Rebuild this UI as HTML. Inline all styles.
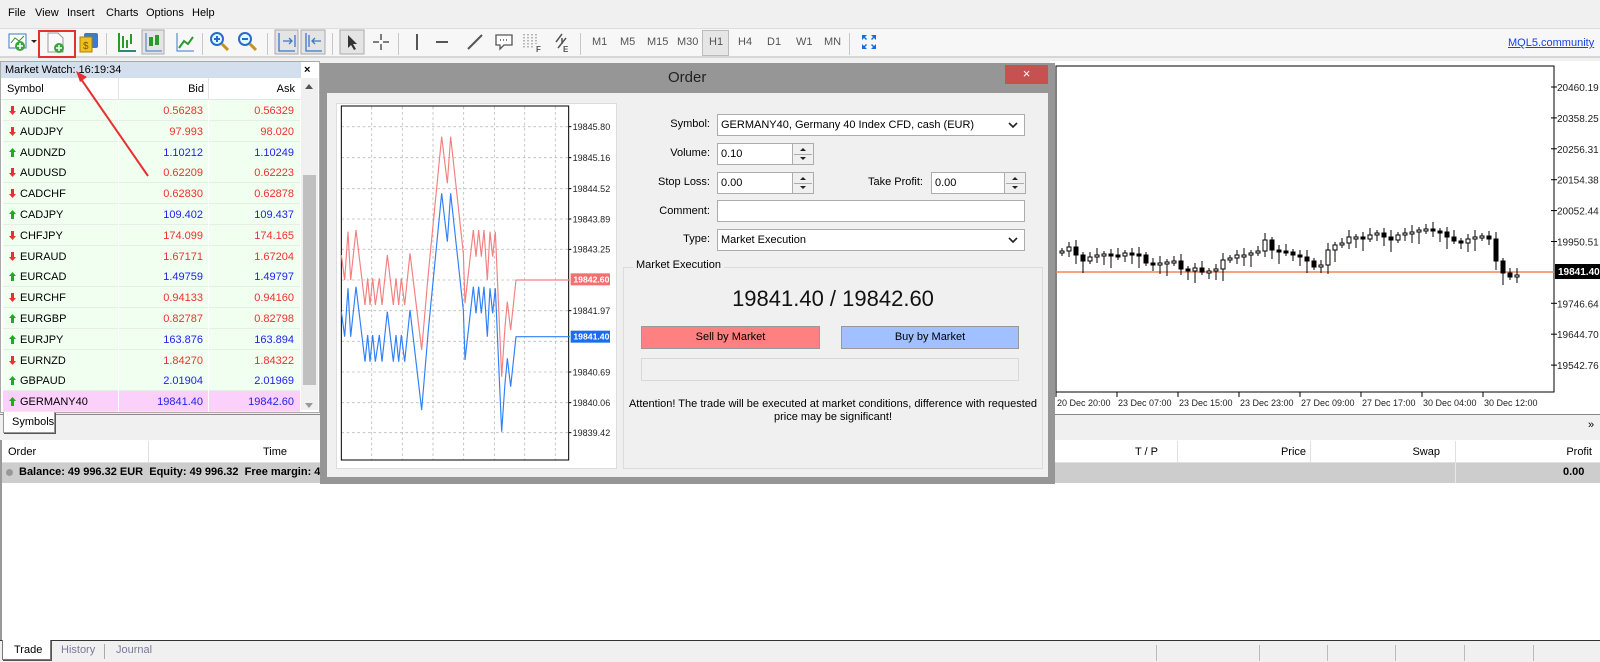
<!DOCTYPE html>
<html><head><meta charset="utf-8"><style>
*{box-sizing:border-box;margin:0;padding:0}
body{width:1600px;height:662px;overflow:hidden;background:#f0f0f0;font-family:"Liberation Sans",sans-serif;font-size:11px;color:#000;position:relative}
.a{position:absolute}
.r{text-align:right}
.mw div.row{position:absolute;left:3px;width:297px;height:21px;background:#f0fff0;border-bottom:1px solid #e6efe6}
.row span{position:absolute;top:5px}
.tf{position:absolute;top:36px;color:#555;font-size:11px}
.sep{position:absolute;top:33px;width:1px;height:22px;background:#c8c8c8}
.inp{position:absolute;background:#fff;border:1px solid #acacac;height:22px;padding:4px 3px;font-size:11px}
.lbl{position:absolute;text-align:right;width:90px;font-size:11px}
.spin{position:absolute;width:22px;height:22px;border:1px solid #acacac;background:#f0f0f0}
.spin:before{content:"";position:absolute;left:7px;top:4px;border:3px solid transparent;border-bottom:3px solid #222;border-top:0}
.spin:after{content:"";position:absolute;left:7px;top:13px;border:3px solid transparent;border-top:3px solid #222;border-bottom:0}
.spin i{position:absolute;left:1px;right:1px;top:10px;height:1px;background:#acacac}
.th{position:absolute;top:446px;font-size:11px}
.mn{position:absolute;top:7px;font-size:11px}
</style></head><body>
<div class="a" style="left:0;top:0;width:1600px;height:28px;background:#f0f0f0"></div>
<span class="mn" style="left:8px">File</span><span class="mn" style="left:35px">View</span><span class="mn" style="left:67px">Insert</span><span class="mn" style="left:106px">Charts</span><span class="mn" style="left:146px">Options</span><span class="mn" style="left:192px">Help</span>
<div class="a" style="left:0;top:28px;width:1600px;height:30px;background:#f7f7f7;border-top:1px solid #ddd;border-bottom:2px solid #d6d6d6"></div>
<svg class="a" style="left:0;top:28px" width="600" height="30">
<rect x="9" y="6" width="17" height="14" fill="#fff" stroke="#3a78c8"/><polyline points="11,15 15,10 19,13 24,8" fill="none" stroke="#2a9a2a"/><circle cx="20" cy="18" r="5" fill="#3aa63a"/><path d="M20 15v6M17 18h6" stroke="#fff" stroke-width="1.5"/>
<path d="M31 12h6l-3 3z" fill="#222"/>
<path d="M48 5h10l5 5v14h-15z" fill="#fafafa" stroke="#999"/><circle cx="59" cy="20" r="5" fill="#3aa63a"/><path d="M59 17v6M56 20h6" stroke="#fff" stroke-width="1.5"/>
<rect x="84" y="5" width="14" height="15" fill="#3a7ad0" rx="2"/><rect x="80" y="9" width="12" height="15" fill="#f0c020" stroke="#b08000"/><text x="83" y="21" font-size="10" fill="#7a5a00">$</text>
<path d="M119 5v18h17M123 8v12M127 12v8M131 6v10" stroke="#2a9a2a" stroke-width="2" fill="none"/><path d="M119 23h17" stroke="#3a78c8"/>
<rect x="142" y="2" width="22" height="24" fill="#e4e4e4" stroke="#aaa"/><path d="M146 5v18h16" stroke="#3a78c8" fill="none"/><rect x="149" y="9" width="4" height="9" fill="#2a9a2a"/><rect x="155" y="7" width="4" height="10" fill="#2a9a2a"/>
<path d="M177 5v18h17" stroke="#3a78c8" fill="none"/><polyline points="179,20 184,13 188,16 193,9" fill="none" stroke="#2a9a2a" stroke-width="2"/>
<circle cx="217" cy="11" r="6" fill="#dff" stroke="#2a6acc" stroke-width="2"/><path d="M214 11h6M217 8v6" stroke="#2a6acc" stroke-width="2"/><path d="M222 16l6 6" stroke="#c89020" stroke-width="3"/>
<circle cx="245" cy="11" r="6" fill="#dff" stroke="#2a6acc" stroke-width="2"/><path d="M242 11h6" stroke="#2a6acc" stroke-width="2"/><path d="M250 16l6 6" stroke="#c89020" stroke-width="3"/>
<rect x="275" y="2" width="23" height="24" fill="#e4e4e4" stroke="#aaa"/><path d="M279 5v18h16M295 7v12M283 13h9M289 10l3 3-3 3" stroke="#3a78c8" stroke-width="1.3" fill="none"/>
<rect x="301" y="2" width="24" height="24" fill="#e4e4e4" stroke="#aaa"/><path d="M306 5v18h16M309 7v12M312 13h9M315 10l-3 3 3 3" stroke="#3a78c8" stroke-width="1.3" fill="none"/>
<rect x="340" y="2" width="24" height="24" fill="#e4e4e4" stroke="#aaa"/><path d="M348 7v13l3-3 3 5 2-1-3-5h4z" fill="#333"/>
<path d="M381 6v6M381 16v6M373 14h6M383 14h6" stroke="#555" stroke-width="1.5"/>
<path d="M417 6v16" stroke="#555" stroke-width="2"/><path d="M436 14h12" stroke="#555" stroke-width="2"/><path d="M468 21l14-14" stroke="#555" stroke-width="2"/>
<path d="M496 7h16v10h-8l-4 4v-4h-4z" fill="#fff" stroke="#555" stroke-width="1.3"/><path d="M500 12h1M503 12h1M506 12h1" stroke="#555" stroke-width="1.5"/>
<path d="M524 6v14M528 6v14M532 6v14M536 6v10" stroke="#777" stroke-dasharray="1.5 1.5"/><text x="536" y="24" font-size="8" font-weight="bold" fill="#555">F</text>
<path d="M556 14l6-8M558 20l8-10M562 10v6" stroke="#555" stroke-width="1.5"/><text x="563" y="24" font-size="8" font-weight="bold" fill="#555">E</text>
</svg>
<div class="a" style="left:38px;top:30px;width:38px;height:28px;border:2px solid #e53030"></div>
<div class="sep" style="left:106px"></div><div class="sep" style="left:202px"></div><div class="sep" style="left:267px"></div><div class="sep" style="left:332px"></div><div class="sep" style="left:398px"></div><div class="sep" style="left:580px"></div><div class="sep" style="left:849px"></div>
<span class="tf" style="left:592px">M1</span><span class="tf" style="left:620px">M5</span><span class="tf" style="left:647px">M15</span><span class="tf" style="left:677px">M30</span>
<div class="a" style="left:702px;top:30px;width:27px;height:26px;background:#e6e6e6;border:1px solid #bbb"></div>
<span class="tf" style="left:709px">H1</span><span class="tf" style="left:738px">H4</span><span class="tf" style="left:767px">D1</span><span class="tf" style="left:796px">W1</span><span class="tf" style="left:824px">MN</span>
<svg class="a" style="left:862px;top:35px" width="14" height="14"><path d="M0 0h5l-2 2 2 2-1 1-2-2-2 2zM14 0v5l-2-2-2 2-1-1 2-2-2-2zM0 14v-5l2 2 2-2 1 1-2 2 2 2zM14 14h-5l2-2-2-2 1-1 2 2 2-2z" fill="#1a6ae0"/></svg>
<div class="a" style="left:1508px;top:37px;color:#1a3ee8;text-decoration:underline;font-size:11px">MQL5.community</div>

<div class="a" style="left:0;top:61px;width:320px;height:352px;background:#fff;border:1px solid #aaa"></div>
<div class="a" style="left:1px;top:62px;width:300px;height:16px;background:#d3dfec"></div>
<div class="a" style="left:5px;top:64px;font-size:11px">Market Watch: 16:19:34</div>
<div class="a" style="left:304px;top:64px;font-weight:bold">×</div>
<div class="a" style="left:1px;top:78px;width:300px;height:22px;background:#fff;border-bottom:1px solid #e4e4e4"></div>
<div class="a" style="left:118px;top:78px;width:1px;height:22px;background:#e4e4e4"></div><div class="a" style="left:208px;top:78px;width:1px;height:22px;background:#e4e4e4"></div>
<div class="a" style="left:7px;top:83px">Symbol</div><div class="a r" style="left:150px;width:54px;top:83px">Bid</div><div class="a r" style="left:240px;width:55px;top:83px">Ask</div>
<div class="a" style="left:301px;top:78px;width:17px;height:332px;background:#f0f0f0"></div>
<div class="a" style="left:303px;top:175px;width:13px;height:210px;background:#c0c0c0"></div>
<div class="a" style="left:305px;top:84px;border:4px solid transparent;border-bottom:5px solid #555;border-top:0"></div>
<div class="a" style="left:305px;top:403px;border:4px solid transparent;border-top:5px solid #999;border-bottom:0"></div>
<div class="mw" id="mw"></div>

<div class="a" style="left:1050px;top:61px;width:550px;height:353px;background:#fff"></div>
<svg class="a" style="left:1050px;top:61px" width="550" height="353" id="ch"></svg>
<div class="a" style="left:0;top:414px;width:1600px;height:27px;background:#f0f0f0;border-top:1px solid #888"></div>
<div class="a" style="left:1588px;top:419px;font-size:11px">»</div>
<div class="a" style="left:3px;top:412px;width:52px;height:21px;background:#fff;border:1px solid #999;border-top:0;box-shadow:1px 1px 0 #555"></div>
<div class="a" style="left:12px;top:416px">Symbols</div>
<div class="a" style="left:0;top:440px;width:1600px;height:200px;background:#fff;border-left:2px solid #999"></div>
<div class="a" style="left:2px;top:441px;width:1598px;height:22px;background:#fff;border-bottom:1px solid #e0e0e0"></div>
<div class="a" style="left:148px;top:441px;width:1px;height:22px;background:#e0e0e0"></div>
<div class="a" style="left:1177px;top:441px;width:1px;height:22px;background:#e0e0e0"></div>
<div class="a" style="left:1310px;top:441px;width:1px;height:22px;background:#e0e0e0"></div>
<div class="a" style="left:1455px;top:441px;width:1px;height:22px;background:#e0e0e0"></div>
<span class="th" style="left:8px">Order</span><span class="th r" style="left:230px;width:57px">Time</span>
<span class="th r" style="left:1100px;width:58px">T / P</span><span class="th r" style="left:1250px;width:56px">Price</span><span class="th r" style="left:1380px;width:60px">Swap</span><span class="th r" style="left:1530px;width:62px">Profit</span>
<div class="a" style="left:2px;top:463px;width:1598px;height:20px;background:#cdcdcd"></div>
<div class="a" style="left:1455px;top:463px;width:1px;height:20px;background:#e8e8e8"></div>
<div class="a" style="left:6px;top:469px;width:7px;height:7px;border-radius:50%;background:#999"></div>
<div class="a" style="left:19px;top:466px;font-weight:bold">Balance: 49 996.32 EUR&nbsp; Equity: 49 996.32&nbsp; Free margin: 49 996.32</div>
<div class="a" style="left:1563px;top:466px;font-weight:bold">0.00</div>
<div class="a" style="left:0;top:640px;width:1600px;height:22px;background:#f0f0f0;border-top:1px solid #333"></div>
<div class="a" style="left:2px;top:640px;width:49px;height:20px;background:#fff;border:1px solid #777;border-top:0;box-shadow:1px 1px 0 #555"></div>
<div class="a" style="left:14px;top:644px">Trade</div>
<div class="a" style="left:61px;top:644px;color:#7a7a9a">History</div><div class="a" style="left:104px;top:644px;width:1px;height:15px;background:#aaa"></div>
<div class="a" style="left:116px;top:644px;color:#7a7a9a">Journal</div>
<div class="a" style="left:1156px;top:645px;width:1px;height:16px;background:#bbb"></div><div class="a" style="left:1259px;top:645px;width:1px;height:16px;background:#bbb"></div><div class="a" style="left:1327px;top:645px;width:1px;height:16px;background:#bbb"></div><div class="a" style="left:1395px;top:645px;width:1px;height:16px;background:#bbb"></div><div class="a" style="left:1464px;top:645px;width:1px;height:16px;background:#bbb"></div><div class="a" style="left:1533px;top:645px;width:1px;height:16px;background:#bbb"></div>

<div class="a" style="left:320px;top:63px;width:735px;height:421px;background:#969696"></div>
<div class="a" style="left:668px;top:69px;font-size:15px;color:#222">Order</div>
<div class="a" style="left:1005px;top:65px;width:43px;height:19px;background:#c75050;color:#fff;text-align:center;font-size:13px;line-height:18px">×</div>
<div class="a" style="left:327px;top:93px;width:721px;height:384px;background:#f0f0f0"></div>
<div class="a" style="left:336px;top:103px;width:281px;height:366px;background:#fff;border:1px solid #ddd"></div>
<svg class="a" style="left:320px;top:100px" width="290" height="370" viewBox="0 0 870 1110">
<g stroke="#bbb" stroke-width="2.5" stroke-dasharray="8 8">
<path d="M155 20v1060M247 20v1060M339 20v1060M431 20v1060M523 20v1060M614 20v1060M706 20v1060"/>
<path d="M64 80h682M64 173h682M64 266h682M64 357h682M64 448h682M64 540h682M64 632h682M64 724h682M64 816h682M64 908h682M64 998h682"/>
</g>
<rect x="64" y="18" width="682" height="1062" fill="none" stroke="#000" stroke-width="3"/>
<polyline id="rl" fill="none" stroke="#f48080" stroke-width="3.5" points=""/>
<polyline id="bl" fill="none" stroke="#3080f8" stroke-width="3.5" points=""/>
<g font-family="Liberation Sans" font-size="27" fill="#222">
<text x="758" y="90">19845.80</text><text x="758" y="183">19845.16</text><text x="758" y="276">19844.52</text><text x="758" y="367">19843.89</text><text x="758" y="458">19843.25</text><text x="758" y="642">19841.97</text><text x="758" y="826">19840.69</text><text x="758" y="918">19840.06</text><text x="758" y="1008">19839.42</text>
</g>
<g stroke="#000" stroke-width="3"><path d="M746 80h8M746 173h8M746 266h8M746 357h8M746 448h8M746 632h8M746 816h8M746 908h8M746 998h8"/></g>
<rect x="752" y="520" width="118" height="36" fill="#f47070"/><text x="760" y="547" font-family="Liberation Sans" font-size="26" font-weight="bold" fill="#fff">19842.60</text>
<rect x="752" y="692" width="118" height="36" fill="#1a6cf0"/><text x="760" y="719" font-family="Liberation Sans" font-size="26" font-weight="bold" fill="#fff">19841.40</text>
</svg>
<div class="lbl" style="left:620px;top:118px">Symbol:</div>
<div class="inp" style="left:717px;top:114px;width:308px">GERMANY40, Germany 40 Index CFD, cash (EUR)</div>
<svg class="a" style="left:1008px;top:122px" width="10" height="7"><path d="M1 1l4 4 4-4" stroke="#222" stroke-width="1.6" fill="none"/></svg>
<div class="lbl" style="left:620px;top:147px">Volume:</div>
<div class="inp" style="left:717px;top:143px;width:76px">0.10</div><div class="spin" style="left:792px;top:143px"><i></i></div>
<div class="lbl" style="left:620px;top:176px">Stop Loss:</div>
<div class="inp" style="left:717px;top:172px;width:76px">0.00</div><div class="spin" style="left:792px;top:172px"><i></i></div>
<div class="lbl" style="left:833px;top:176px">Take Profit:</div>
<div class="inp" style="left:931px;top:172px;width:76px">0.00</div><div class="spin" style="left:1004px;top:172px"><i></i></div>
<div class="lbl" style="left:620px;top:205px">Comment:</div>
<div class="inp" style="left:717px;top:200px;width:308px"></div>
<div class="lbl" style="left:620px;top:233px">Type:</div>
<div class="inp" style="left:717px;top:229px;width:308px">Market Execution</div>
<svg class="a" style="left:1008px;top:237px" width="10" height="7"><path d="M1 1l4 4 4-4" stroke="#222" stroke-width="1.6" fill="none"/></svg>
<div class="a" style="left:623px;top:267px;width:420px;height:202px;border:1px solid #dcdcdc"></div>
<div class="a" style="left:633px;top:259px;background:#f0f0f0;padding:0 3px">Market Execution</div>
<div class="a" style="left:623px;top:286px;width:420px;text-align:center;font-size:22px;color:#111">19841.40 / 19842.60</div>
<div class="a" style="left:641px;top:326px;width:179px;height:23px;background:#ff8080;border:1px solid #999;text-align:center;line-height:21px">Sell by Market</div>
<div class="a" style="left:841px;top:326px;width:178px;height:23px;background:#a0c0ff;border:1px solid #999;text-align:center;line-height:21px">Buy by Market</div>
<div class="a" style="left:641px;top:358px;width:378px;height:23px;border:1px solid #d8d8d8"></div>
<div class="a" style="left:623px;top:398px;width:420px;text-align:center;line-height:13px">Attention! The trade will be executed at market conditions, difference with requested<br>price may be significant!</div>

<svg class="a" style="left:0;top:0" width="200" height="200"><path d="M148 176L81 79" stroke="#e53030" stroke-width="2"/><path d="M76 71l11 6-7 5z" fill="#e53030"/></svg>

<script>
(function(){
var rows=[["AUDCHF",0,"0.56283","0.56329",0],["AUDJPY",0,"97.993","98.020",0],["AUDNZD",1,"1.10212","1.10249",1],["AUDUSD",0,"0.62209","0.62223",0],["CADCHF",0,"0.62830","0.62878",0],["CADJPY",1,"109.402","109.437",1],["CHFJPY",0,"174.099","174.165",0],["EURAUD",0,"1.67171","1.67204",0],["EURCAD",1,"1.49759","1.49797",1],["EURCHF",0,"0.94133","0.94160",0],["EURGBP",1,"0.82787","0.82798",0],["EURJPY",1,"163.876","163.894",1],["EURNZD",0,"1.84270","1.84322",0],["GBPAUD",1,"2.01904","2.01969",1],["GERMANY40",1,"19841.40","19842.60",1]];
var h="";rows.forEach(function(r,i){var t=100+i*20.8;var c=r[4]?"#2222ee":"#f03030";var bg=i==14?"background:#fbd0fb":"";
var ar=r[1]?'<svg style="position:absolute;left:6px;top:6px" width="7" height="9"><path d="M3.5 0L7 4H5v5H2V4H0z" fill="#1faa1f"/></svg>':'<svg style="position:absolute;left:6px;top:6px" width="7" height="9"><path d="M3.5 9L7 5H5V0H2v5H0z" fill="#e83030"/></svg>';
h+='<div class="row" style="top:'+t+'px;'+bg+'">'+ar+'<span style="left:17px">'+r[0]+'</span><span style="left:115px;width:1px;height:21px;top:0;background:#fff"></span><span style="left:205px;width:1px;height:21px;top:0;background:#fff"></span><span style="right:97px;color:'+c+'">'+r[2]+'</span><span style="right:6px;color:'+c+'">'+r[3]+'</span></div>';});
document.getElementById("mw").innerHTML=h;
var rp=[[64,465],[74,540],[84,395],[92,540],[108,390],[135,615],[143,535],[150,615],[158,535],[166,615],[178,535],[186,615],[202,465],[220,615],[228,535],[236,615],[244,535],[254,615],[270,460],[305,750],[325,520],[365,110],[382,250],[392,110],[430,460],[435,610],[460,390],[468,470],[476,390],[484,470],[492,390],[502,540],[510,395],[518,470],[526,395],[545,830],[555,680],[562,605],[572,690],[588,540],[750,540]];
var bp=rp.map(function(p){return [p[0],p[1]+170]});
bp[19][1]=930;bp[21][1]=280;bp[22][1]=425;bp[23][1]=280;bp[24][1]=630;bp[25][1]=780;bp[35][1]=995;bp[36][1]=850;bp[37][1]=775;bp[38][1]=860;bp[39][1]=710;bp[40][1]=710;
document.getElementById("rl").setAttribute("points",rp.join(" "));
document.getElementById("bl").setAttribute("points",bp.join(" "));
var s='<rect x="6" y="5" width="498" height="326" fill="none" stroke="#000"/>';
var labs=["20460.19","20358.25","20256.31","20154.38","20052.44","19950.51","","19746.64","19644.70","19542.76"];
labs.forEach(function(l,i){var y=26+i*30.9;if(l){s+='<path d="M501 '+y+'h6" stroke="#000"/><text x="507" y="'+(y+4)+'" font-family="Liberation Sans" font-size="10" fill="#222">'+l+'</text>';}});
s+='<path d="M6 211H504" stroke="#f4845a" stroke-width="1.5"/><rect x="505" y="203" width="45" height="15" fill="#000"/><text x="508" y="214" font-family="Liberation Sans" font-size="10" font-weight="bold" fill="#fff">19841.40</text>';
var tl=["20 Dec 20:00","23 Dec 07:00","23 Dec 15:00","23 Dec 23:00","27 Dec 09:00","27 Dec 17:00","30 Dec 04:00","30 Dec 12:00"];
tl.forEach(function(t,i){var x=6+i*61;s+='<path d="M'+x+' 331v5" stroke="#000"/><text x="'+(x+1)+'" y="345" font-family="Liberation Sans" font-size="9" fill="#222">'+t+'</text>';});
var lv=[186,182,190,196,192,190,189,190,191,188,189,190,198,200,198,197,196,204,206,203,207,206,204,195,193,190,190,188,186,175,185,186,187,190,192,196,202,200,185,180,178,172,172,174,170,168,172,175,170,168,167,165,164,166,167,172,176,178,174,172,171,174,196,208,212,210];
var prev=lv[0];
for(var i=0;i<lv.length;i++){var x=10+i*7;var o=prev+4,c=lv[i]+4;prev=lv[i];var t0=Math.min(o,c),b0=Math.max(o,c);if(b0-t0<2)b0=t0+2;var wt=t0-3-(i%3)*2,wb=b0+3+(i%4)*3;
s+='<path d="M'+(x+2)+' '+wt+'V'+wb+'" stroke="#000"/>';
s+='<rect x="'+x+'" y="'+t0+'" width="4" height="'+(b0-t0)+'" fill="'+(c>o?"#000":"#fff")+'" stroke="#000" stroke-width="1"/>';}
document.getElementById("ch").innerHTML=s;
})();
</script>
</body></html>
